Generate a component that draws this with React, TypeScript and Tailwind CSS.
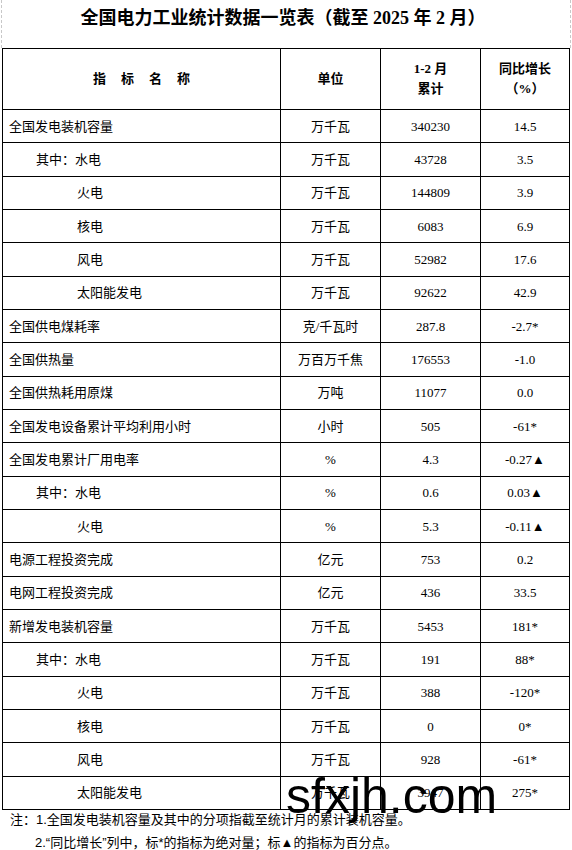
const rows: [string, number, string, string, string][] = [
  ["全国发电装机容量", 0, "万千瓦", "340230", "14.5"],
  ["其中：水电", 1, "万千瓦", "43728", "3.5"],
  ["火电", 2, "万千瓦", "144809", "3.9"],
  ["核电", 2, "万千瓦", "6083", "6.9"],
  ["风电", 2, "万千瓦", "52982", "17.6"],
  ["太阳能发电", 2, "万千瓦", "92622", "42.9"],
  ["全国供电煤耗率", 0, "克/千瓦时", "287.8", "-2.7*"],
  ["全国供热量", 0, "万百万千焦", "176553", "-1.0"],
  ["全国供热耗用原煤", 0, "万吨", "11077", "0.0"],
  ["全国发电设备累计平均利用小时", 0, "小时", "505", "-61*"],
  ["全国发电累计厂用电率", 0, "%", "4.3", "-0.27▲"],
  ["其中：水电", 1, "%", "0.6", "0.03▲"],
  ["火电", 2, "%", "5.3", "-0.11▲"],
  ["电源工程投资完成", 0, "亿元", "753", "0.2"],
  ["电网工程投资完成", 0, "亿元", "436", "33.5"],
  ["新增发电装机容量", 0, "万千瓦", "5453", "181*"],
  ["其中：水电", 1, "万千瓦", "191", "88*"],
  ["火电", 2, "万千瓦", "388", "-120*"],
  ["核电", 2, "万千瓦", "0", "0*"],
  ["风电", 2, "万千瓦", "928", "-61*"],
  ["太阳能发电", 2, "万千瓦", "3947", "275*"],
];

const indent = ["pl-[6px]", "pl-[33px]", "pl-[74px]"];

export default function App() {
  return (
    <div className="relative w-[572px] h-[850px] overflow-hidden bg-white text-black" style={{ fontFamily: '"Liberation Serif", "Noto Sans CJK SC", serif' }}>
      <div className="h-[48px] mx-[1px] border-x border-dashed border-[#c8c8c8] flex items-center justify-center">
        <h1 className="text-[18px] font-bold leading-none -mt-[12px] -ml-[6px]">全国电力工业统计数据一览表（截至 2025 年 2 月）</h1>
      </div>

      <table className="ml-[2px] w-[567px] table-fixed border-collapse text-[13px]">
        <colgroup>
          <col className="w-[278px]" />
          <col className="w-[100px]" />
          <col className="w-[100px]" />
          <col className="w-[89px]" />
        </colgroup>
        <thead>
          <tr className="h-[61px] font-bold leading-[20px]">
            <th className="border border-black font-bold">
              <span className="tracking-[15px] pl-[15px]">指标名称</span>
            </th>
            <th className="border border-black font-bold">单位</th>
            <th className="border border-black font-bold">1-2 月<br />累计</th>
            <th className="border border-black font-bold">同比增长<br />（%）</th>
          </tr>
        </thead>
        <tbody>
          {rows.map(([name, lvl, unit, val, yoy], i) => (
            <tr key={i} className="h-[33.33px] leading-none">
              <td className={`border border-black ${indent[lvl]}`}>{name}</td>
              <td className="border border-black text-center">{unit}</td>
              <td className="border border-black text-center">{val}</td>
              <td className="border border-black text-center">{yoy}</td>
            </tr>
          ))}
        </tbody>
      </table>

      <div className="text-[13px] leading-[23px] -mt-[2px]" style={{ fontFamily: '"Liberation Sans", "Noto Sans CJK SC", sans-serif' }}>
        <p className="pl-[10px]">注：1.全国发电装机容量及其中的分项指截至统计月的累计装机容量。</p>
        <p className="pl-[35px]">2.“同比增长”列中，标*的指标为绝对量；标▲的指标为百分点。</p>
      </div>

      {/* watermark */}
      <div className="absolute left-[286px] top-[771px] text-[50px] leading-none pointer-events-none" style={{ fontFamily: '"Liberation Sans", sans-serif' }}>
        sfxjh.com
      </div>
    </div>
  );
}
